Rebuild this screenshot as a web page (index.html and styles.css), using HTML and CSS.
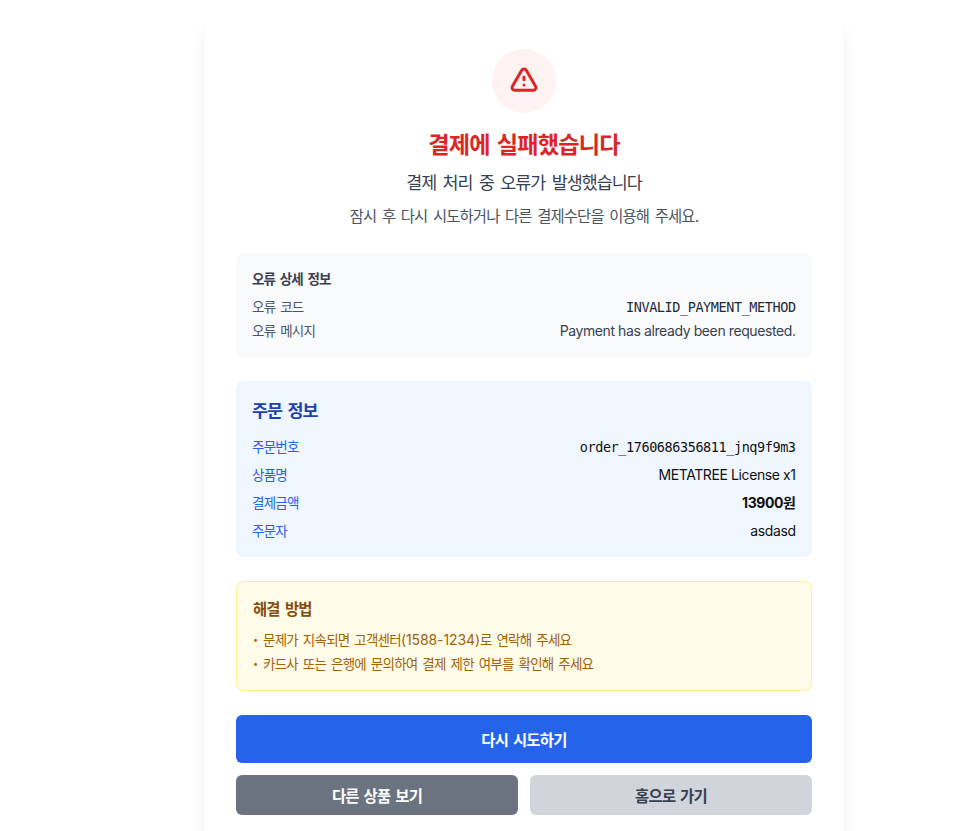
FILE: index.html
```html
<!DOCTYPE html>
<html lang="ko">
<head>
<meta charset="utf-8">
<title>결제 실패</title>
<link rel="stylesheet" href="styles.css">
</head>
<body>
<main class="page">
  <section class="card">
    <header class="head">
      <div class="icon-wrap">
        <svg class="icon" viewBox="0 0 24 24" fill="none" stroke="currentColor" stroke-width="2.25" stroke-linecap="round" stroke-linejoin="round"><path d="M12 9v2m0 4h.01m-6.938 4h13.856c1.54 0 2.502-1.667 1.732-3L13.732 4c-.77-1.333-2.694-1.333-3.464 0L3.34 16c-.77 1.333.192 3 1.732 3z"/></svg>
      </div>
      <h1 class="title">결제에 실패했습니다</h1>
      <p class="subtitle">결제 처리 중 오류가 발생했습니다</p>
      <p class="desc">잠시 후 다시 시도하거나 다른 결제수단을 이용해 주세요.</p>
    </header>

    <div class="box box-gray">
      <h2 class="gray-title">오류 상세 정보</h2>
      <div class="gray-rows">
        <div class="row"><span class="label">오류 코드</span><span class="mono">INVALID_PAYMENT_METHOD</span></div>
        <div class="row"><span class="label">오류 메시지</span><span class="latin">Payment has already been requested.</span></div>
      </div>
    </div>

    <div class="box box-blue">
      <h2 class="blue-title">주문 정보</h2>
      <div class="blue-rows">
        <div class="row"><span class="label blue-label">주문번호</span><span class="mono dark">order_1760686356811_jnq9f9m3</span></div>
        <div class="row"><span class="label blue-label">상품명</span><span class="latin dark">METATREE License x1</span></div>
        <div class="row"><span class="label blue-label">결제금액</span><span class="latin dark strong">13900원</span></div>
        <div class="row"><span class="label blue-label">주문자</span><span class="latin dark">asdasd</span></div>
      </div>
    </div>

    <div class="box box-yellow">
      <h2 class="yellow-title">해결 방법</h2>
      <ul class="tips">
        <li class="tip"><span class="dot">•</span><span>문제가 지속되면 고객센터<span class="digits">(1588-1234)</span>로 연락해 주세요</span></li>
        <li class="tip"><span class="dot">•</span><span>카드사 또는 은행에 문의하여 결제 제한 여부를 확인해 주세요</span></li>
      </ul>
    </div>

    <div class="actions">
      <button class="btn btn-primary">다시 시도하기</button>
      <div class="btn-pair">
        <button class="btn btn-small btn-gray">다른 상품 보기</button>
        <button class="btn btn-small btn-light">홈으로 가기</button>
      </div>
    </div>
  </section>
</main>
</body>
</html>
```
FILE: styles.css
```css
* { box-sizing: border-box; margin: 0; padding: 0; }
html, body { height: 831px; overflow: hidden; background: #fff; }
body { font-family: Inter, "Noto Sans CJK KR", "Noto Sans", sans-serif; color: #111827; }
.page { display: flex; justify-content: center; padding: 17px 0 0 93px; }
.card { width: 640px; background: #fff; border-radius: 8px; padding: 32px; box-shadow: 0 10px 15px -3px rgba(0,0,0,.1), 0 4px 6px -4px rgba(0,0,0,.1); }
.head { display: flex; flex-direction: column; align-items: center; margin-bottom: 24px; }
.icon-wrap { width: 64px; height: 64px; border-radius: 50%; background: #fef2f2; display: flex; align-items: center; justify-content: center; margin-bottom: 16px; }
.icon { width: 32px; height: 32px; color: #dc2626; display: block; }
.title { font-size: 23.2px; line-height: 32px; font-weight: 700; color: #dc2626; margin-bottom: 8px; letter-spacing: -.85px; word-spacing: 2.5px; }
.subtitle { font-size: 17.4px; line-height: 28px; color: #374151; margin-bottom: 8px; letter-spacing: -.97px; word-spacing: 2.4px; }
.desc { font-size: 15.4px; line-height: 24px; color: #4b5563; letter-spacing: -.86px; word-spacing: 2.1px; }
.box { border-radius: 8px; padding: 16px; margin-bottom: 24px; }
.row { display: flex; justify-content: space-between; font-size: 14px; line-height: 20px; }
.label { font-size: 13.5px; letter-spacing: -.77px; word-spacing: 1.85px; }
.latin { letter-spacing: -.4px; padding-right: .4px; }
.box-gray { background: #f9fafb; color: #374151; }
.box-gray .label { color: #4b5563; }
.box-gray .mono { color: #1f2937; }
.gray-title { font-size: 13.5px; line-height: 20px; font-weight: 600; color: #374151; margin-bottom: 8px; letter-spacing: -.8px; word-spacing: 1.85px; }
.gray-rows { display: flex; flex-direction: column; gap: 4px; }
.mono { font-family: "DejaVu Sans Mono", monospace; font-size: 13.5px; letter-spacing: -.42px; padding-right: .42px; }
.box-blue { background: #eff6ff; }
.blue-title { font-size: 17.4px; line-height: 28px; font-weight: 600; color: #1e40af; margin-bottom: 12px; letter-spacing: -1.1px; word-spacing: 2.5px; }
.blue-rows { display: flex; flex-direction: column; gap: 8px; }
.blue-label { color: #2563eb; }
.dark { color: #111; }
.strong { font-weight: 700; }
.box-yellow { background: #fefce8; border: 1px solid #fef08a; }
.yellow-title { font-size: 15.4px; line-height: 24px; font-weight: 600; color: #854d0e; margin-bottom: 8px; letter-spacing: -.9px; word-spacing: 2.5px; }
.tips { list-style: none; display: flex; flex-direction: column; gap: 4px; font-size: 13.5px; line-height: 20px; color: #a16207; letter-spacing: -.77px; word-spacing: 1.85px; }
.digits { font-size: 14px; letter-spacing: -.1px; }
.tip { display: flex; }
.dot { width: 10px; font-size: 9px; flex: none; }
.actions { display: flex; flex-direction: column; gap: 12px; }
.btn { border: 0; font-family: inherit; font-size: 15.4px; font-weight: 600; border-radius: 6px; display: block; width: 100%; letter-spacing: -.72px; word-spacing: 1.6px; }
.btn-primary { height: 48px; background: #2563eb; color: #fff; }
.btn-pair { display: flex; gap: 12px; }
.btn-small { height: 40px; flex: 1; }
.btn-gray { background: #6b7280; color: #fff; }
.btn-light { background: #d1d5db; color: #374151; }
```
